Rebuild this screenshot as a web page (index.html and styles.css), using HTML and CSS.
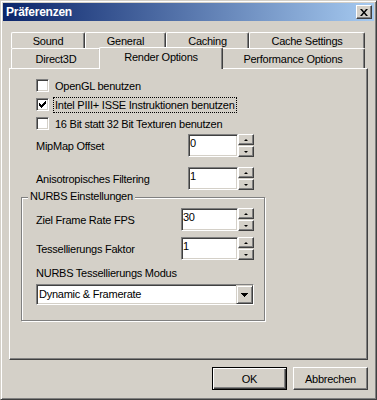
FILE: index.html
```html
<!DOCTYPE html>
<html lang="de">
<head>
    <meta charset="UTF-8">
    <title>Präferenzen</title>
    <link rel="stylesheet" href="styles.css">
</head>
<body>

<div class="window">
    <div class="titlebar">
        <span class="title">Präferenzen</span>
        <button class="close-btn" aria-label="Schließen">
            <svg width="8" height="7" viewBox="0 0 8 7"><path d="M0 0h2l2 2.5L6 0h2L5 3.5 8 7H6L4 4.5 2 7H0l3-3.5z" fill="#000"/></svg>
        </button>
    </div>

    <div class="client">
        <!-- Tabs, two rows -->
        <div class="tabs">
            <div class="tab-row back">
                <div class="tab w-sound">Sound</div>
                <div class="tab w-general">General</div>
                <div class="tab w-caching">Caching</div>
                <div class="tab w-cache-settings">Cache Settings</div>
            </div>
            <div class="tab-row front">
                <div class="tab w-d3d">Direct3D</div>
                <div class="tab w-render active">Render Options</div>
                <div class="tab w-perf">Performance Options</div>
            </div>
        </div>

        <div class="panel">
            <div class="checks">
                <div class="check">
                    <span class="box"></span>
                    <span class="check-label">OpenGL benutzen</span>
                </div>
                <div class="check">
                    <span class="box">
                        <svg width="7" height="7" viewBox="0 0 7 7"><path d="M6 0h1v1H6zM5 1h2v1H5zM0 2h1v1H0zM4 2h3v1H4zM0 3h2v1H0zM3 3h3v1H3zM0 4h5v1H0zM1 5h3v1H1zM2 6h1v1H2z" fill="#000"/></svg>
                    </span>
                    <span class="check-label focus">Intel PIII+ ISSE Instruktionen benutzen</span>
                </div>
                <div class="check">
                    <span class="box"></span>
                    <span class="check-label">16 Bit statt 32 Bit Texturen benutzen</span>
                </div>
            </div>

            <div class="field first">
                <span class="field-label">MipMap Offset</span>
                <span class="edit">0</span>
                <span class="spin">
                    <span class="spin-btn"><span class="arrow-up"></span></span>
                    <span class="spin-btn"><span class="arrow-down"></span></span>
                </span>
            </div>
            <div class="field">
                <span class="field-label">Anisotropisches Filtering</span>
                <span class="edit">1</span>
                <span class="spin">
                    <span class="spin-btn"><span class="arrow-up"></span></span>
                    <span class="spin-btn"><span class="arrow-down"></span></span>
                </span>
            </div>

            <!-- NURBS group -->
            <div class="group">
                <span class="group-title">NURBS Einstellungen</span>
                <div class="field">
                    <span class="field-label">Ziel Frame Rate FPS</span>
                    <span class="edit wide">30</span>
                    <span class="spin">
                        <span class="spin-btn"><span class="arrow-up"></span></span>
                        <span class="spin-btn"><span class="arrow-down"></span></span>
                    </span>
                </div>
                <div class="field">
                    <span class="field-label">Tessellierungs Faktor</span>
                    <span class="edit wide">1</span>
                    <span class="spin">
                        <span class="spin-btn"><span class="arrow-up"></span></span>
                        <span class="spin-btn"><span class="arrow-down"></span></span>
                    </span>
                </div>
                <div class="combo-label">NURBS Tessellierungs Modus</div>
                <div class="combo">
                    <span class="combo-text">Dynamic &amp; Framerate</span>
                    <span class="combo-btn">
                        <svg width="7" height="4" viewBox="0 0 7 4"><path d="M0 0h7v1H0zM1 1h5v1H1zM2 2h3v1H2zM3 3h1v1H3z" fill="#000"/></svg>
                    </span>
                </div>
            </div>
        </div>

        <div class="actions">
            <button class="btn default">OK</button>
            <button class="btn">Abbrechen</button>
        </div>
    </div>
</div>

</body>
</html>
```

FILE: styles.css
```css
/* General */
body {
    margin: 0;
    background-color: #d4d0c8;
    font-family: "Liberation Sans", Arial, sans-serif;
    font-size: 11px;
    letter-spacing: -0.25px;
    color: #000;
}

/* Window frame */
.window {
    width: 377px;
    height: 400px;
    box-sizing: border-box;
    display: flex;
    flex-direction: column;
    padding: 2px;
    background-color: #d4d0c8;
    border: 1px solid;
    border-color: #d4d0c8 #404040 #404040 #d4d0c8;
    box-shadow: inset 1px 1px #fff, inset -1px -1px #808080;
}

/* Title bar */
.titlebar {
    height: 18px;
    display: flex;
    align-items: center;
    justify-content: space-between;
    padding-left: 3px;
    background: linear-gradient(to right, #0a246a, #a6caf0);
}

.title {
    color: #fff;
    font-weight: bold;
    font-size: 12px;
}

.close-btn {
    width: 16px;
    height: 14px;
    margin-right: 2px;
    padding: 0;
    display: flex;
    align-items: center;
    justify-content: center;
    background-color: #d4d0c8;
    border: 1px solid;
    border-color: #fff #404040 #404040 #fff;
    box-shadow: inset -1px -1px #808080;
}

.client {
    flex: 1;
    display: flex;
    flex-direction: column;
    padding: 11px 6px 0;
}

/* Tabs */
.tab-row {
    display: flex;
    padding: 0 2px;
}

.tab-row.back {
    height: 16px;
}

.tab-row.front {
    height: 20px;
    align-items: flex-start;
}

.tab {
    box-sizing: border-box;
    text-align: center;
    white-space: nowrap;
    line-height: 13px;
    background-color: #d4d0c8;
    border-top: 1px solid #fff;
    border-left: 1px solid #fff;
    border-right: 1px solid #404040;
    box-shadow: inset -1px 0 #808080;
    border-radius: 2px 2px 0 0;
}

.back .tab {
    height: 16px;
    padding-top: 2px;
}

.front .tab {
    height: 20px;
    padding-top: 4px;
}

.front .tab.active {
    width: 124px;
    height: 22px;
    margin: -1px -2px -1px;
    padding-top: 3px;
    position: relative;
    z-index: 1;
}

.w-sound { width: 74px; }
.w-general { width: 81px; }
.w-caching { width: 83px; }
.w-cache-settings { width: 116px; }
.w-d3d { width: 90px; }
.w-render { width: 120px; }
.w-perf { width: 144px; }

/* Tab page */
.panel {
    box-sizing: border-box;
    height: 292px;
    padding: 9px 0 0 11px;
    border: 1px solid;
    border-color: #fff #404040 #404040 #fff;
    box-shadow: inset -1px -1px #808080;
}

/* Checkboxes */
.checks {
    display: flex;
    flex-direction: column;
    gap: 3px;
    margin-left: 15px;
}

.check {
    display: flex;
    align-items: flex-start;
    height: 16px;
}

.box {
    width: 13px;
    height: 13px;
    box-sizing: border-box;
    margin-top: 1px;
    display: flex;
    align-items: center;
    justify-content: center;
    background-color: #fff;
    border: 1px solid;
    border-color: #808080 #fff #fff #808080;
    box-shadow: inset 1px 1px #404040, inset -1px -1px #d4d0c8;
}

.check-label {
    margin-left: 4px;
    padding: 0 1px;
    line-height: 14px;
    border: 1px dotted transparent;
}

.check-label.focus {
    border-color: #000;
}

/* Spin edits */
.field {
    display: flex;
    align-items: center;
    width: 218px;
    height: 23px;
    margin-left: 15px;
    margin-top: 10px;
}

.field.first {
    margin-top: 2px;
}

.field-label {
    flex: 1;
    padding-top: 1px;
}

.edit {
    box-sizing: border-box;
    width: 50px;
    height: 23px;
    padding: 2px 1px;
    line-height: 13px;
    background-color: #fff;
    border: 1px solid;
    border-color: #808080 #fff #fff #808080;
    box-shadow: inset 1px 1px #404040, inset -1px -1px #d4d0c8;
}

.edit.wide {
    width: 57px;
}

.spin {
    display: flex;
    flex-direction: column;
    gap: 1px;
    width: 16px;
    height: 23px;
}

.spin-btn {
    flex: 1;
    box-sizing: border-box;
    display: flex;
    align-items: center;
    justify-content: center;
    background-color: #d4d0c8;
    border: 1px solid;
    border-color: #fff #404040 #404040 #fff;
    box-shadow: inset -1px -1px #808080;
}

.arrow-up,
.arrow-down {
    width: 0;
    height: 0;
    border-left: 2px solid transparent;
    border-right: 2px solid transparent;
}

.arrow-up {
    border-bottom: 2px solid #000;
}

.arrow-down {
    border-top: 2px solid #000;
}

/* Group box */
.group {
    width: 244px;
    box-sizing: border-box;
    display: flex;
    flex-direction: column;
    margin-top: 7px;
    padding: 0 10px 15px 14px;
    border: 1px solid #808080;
    box-shadow: inset 1px 1px #fff, 1px 1px #fff;
}

.group-title {
    align-self: flex-start;
    margin: -8px 0 0 -8px;
    padding: 0 2px;
    line-height: 13px;
    background-color: #d4d0c8;
}

.group .field {
    width: auto;
    margin-left: 0;
    margin-top: 6px;
}

.group .group-title + .field {
    margin-top: 5px;
}

.combo-label {
    margin-top: 7px;
    line-height: 13px;
}

.combo {
    display: flex;
    height: 21px;
    box-sizing: border-box;
    margin-top: 4px;
    background-color: #fff;
    border: 1px solid;
    border-color: #808080 #fff #fff #808080;
    box-shadow: inset 1px 1px #404040, inset -1px -1px #d4d0c8;
}

.combo-text {
    flex: 1;
    padding-left: 2px;
    line-height: 19px;
}

.combo-btn {
    width: 17px;
    box-sizing: border-box;
    display: flex;
    align-items: center;
    justify-content: center;
    background-color: #d4d0c8;
    border: 1px solid;
    border-color: #d4d0c8 #404040 #404040 #d4d0c8;
    box-shadow: inset 1px 1px #fff, inset -1px -1px #808080;
}

/* Dialog buttons */
.actions {
    display: flex;
    justify-content: flex-end;
    gap: 6px;
    margin-top: 7px;
}

.btn {
    width: 75px;
    height: 23px;
    padding: 0;
    font: inherit;
    letter-spacing: inherit;
    color: #000;
    background-color: #d4d0c8;
    border: 1px solid;
    border-color: #fff #404040 #404040 #fff;
    box-shadow: inset -1px -1px #808080;
}

.btn.default {
    border-color: #000;
    box-shadow: inset 1px 1px #fff, inset -1px -1px #404040, inset -2px -2px #808080;
}
```
